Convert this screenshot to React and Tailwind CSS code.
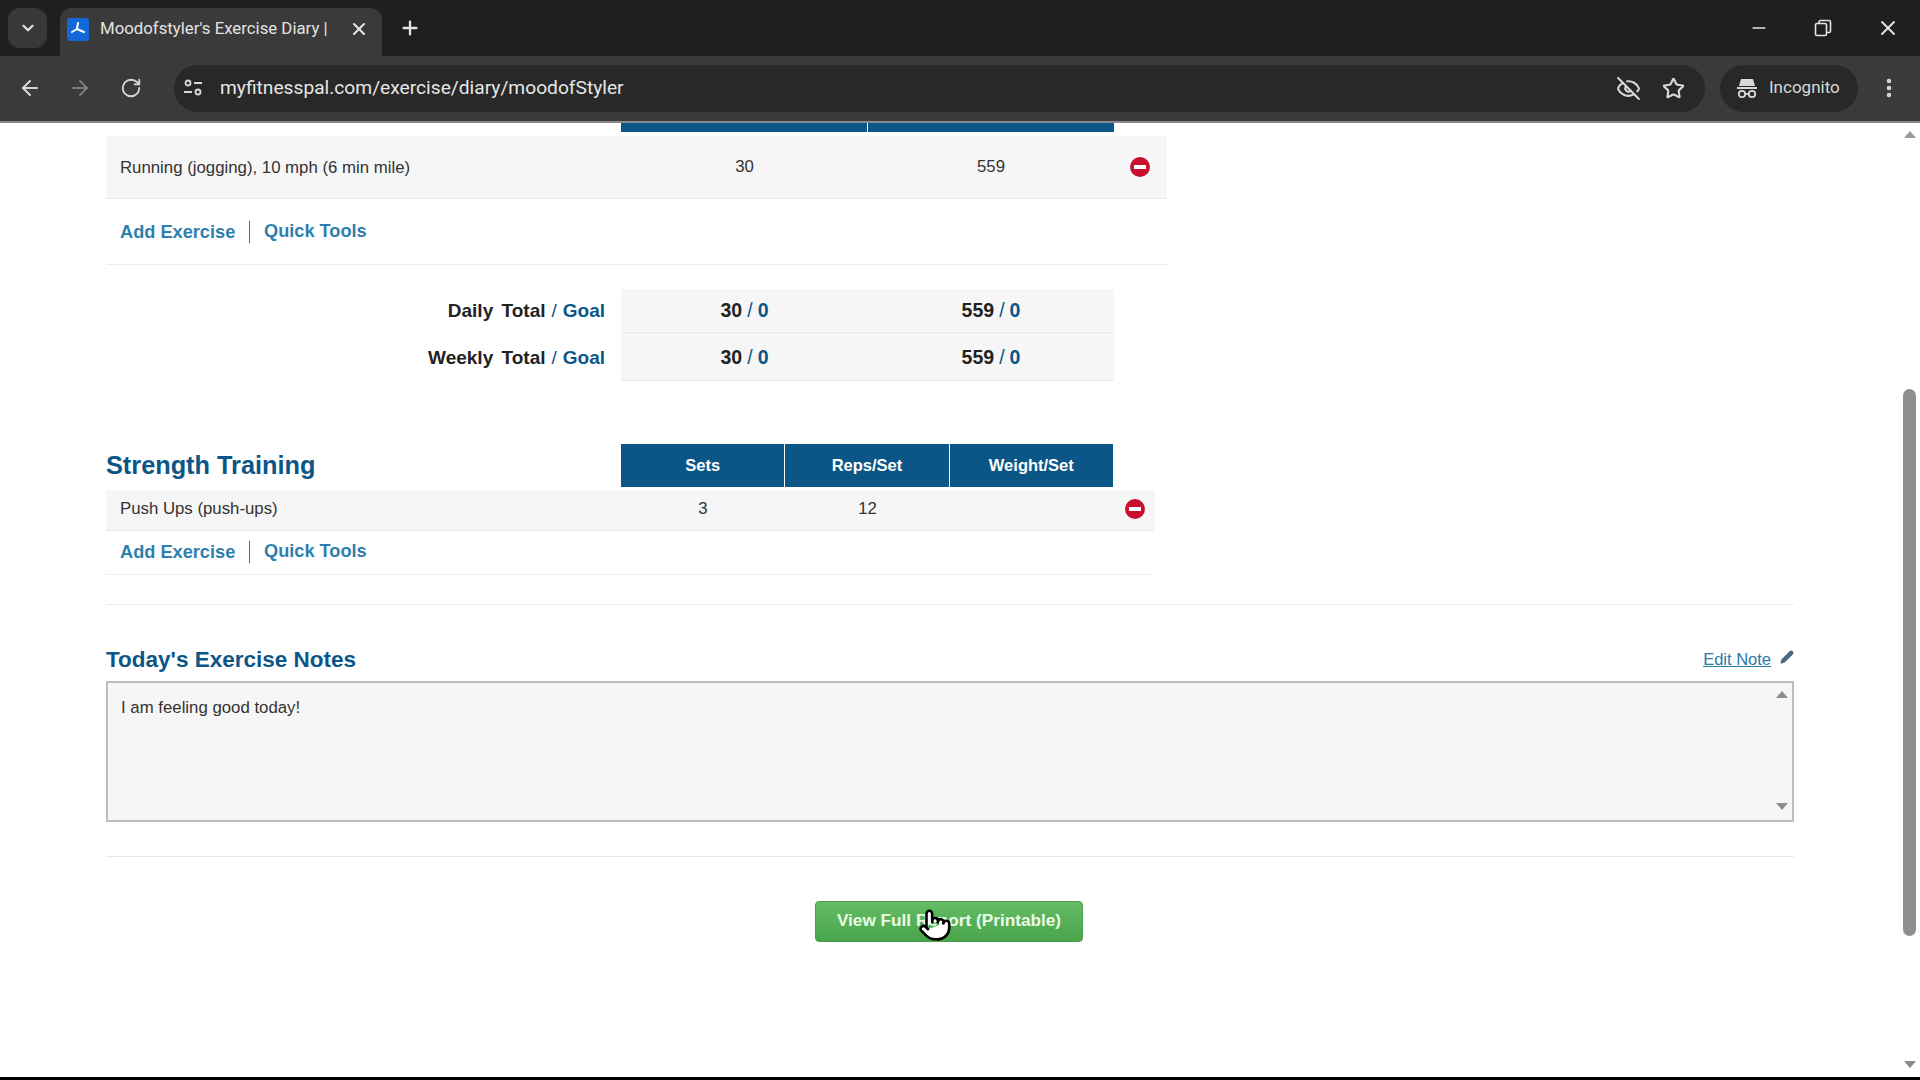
import React from "react";
import { ArrowLeft, ArrowRight, RotateCw, Star, EyeOff, X, Plus, ChevronDown, EllipsisVertical, Minus, Pencil, Pointer } from "lucide-react";

const sans = "font-['Liberation_Sans',Arial,sans-serif]";

function Remove() {
  return (
    <span className="flex h-[20px] w-[20px] items-center justify-center rounded-full bg-[#c8102e]">
      <span className="h-[4px] w-[12px] bg-white" />
    </span>
  );
}

function Links({ h }) {
  return (
    <div className={`flex items-center pl-[14px] text-[18.2px] font-bold text-[#2f7fae] ${h}`}>
      <span className="w-[130px] border-r border-[#2a7aa8] leading-[22px]">Add Exercise</span>
      <span className="pl-[14px]">Quick Tools</span>
    </div>
  );
}

function TotalRow({ label, h, border }) {
  return (
    <div className="flex">
      <div className={`flex w-[515px] items-center justify-end pr-[16px] text-[19px] font-bold text-[#222] ${h}`}>
        <span className="[word-spacing:3px]">{label} Total</span>
        <span className="px-[6px] font-normal text-[#0b5687]">/</span>
        <span className="text-[#0b5687]">Goal</span>
      </div>
      <div className={`flex w-[493px] bg-[#f6f6f6] text-[19.5px] font-bold text-[#222] ${h} ${border}`}>
        <div className="flex w-[247px] items-center justify-center">30<span className="px-[5px] font-normal text-[#0b5687]">/</span><span className="text-[#0b5687]">0</span></div>
        <div className="flex w-[246px] items-center justify-center">559<span className="px-[5px] font-normal text-[#0b5687]">/</span><span className="text-[#0b5687]">0</span></div>
      </div>
    </div>
  );
}

export default function App() {
  return (
    <div className={`relative flex h-[1080px] w-[1920px] flex-col overflow-hidden bg-white ${sans}`}>
      {/* tab strip */}
      <div className="flex h-[56px] items-start bg-[#1f1f1f] font-['Roboto',sans-serif] text-[#e3e3e3]">
        <div className="ml-[8px] mt-[8px] flex h-[40px] w-[39px] items-center justify-center rounded-[12px] bg-[#383838]">
          <ChevronDown size={18} strokeWidth={3} />
        </div>
        <div className="ml-[13px] mt-[8px] flex h-[48px] w-[322px] items-center rounded-t-[12px] bg-[#3a3a3a] pb-[6px]">
          <div className="ml-[7px] flex h-[23px] w-[22px] items-center justify-center rounded-[3px] bg-[#1467d6]">
            <svg width="16" height="16" viewBox="0 0 16 16" fill="none" stroke="white" strokeWidth="2" strokeLinecap="round">
              <path d="M8 2 L7 8 L2 11 M7 8 L14 11" />
            </svg>
          </div>
          <span className="ml-[11px] w-[232px] whitespace-nowrap text-[16.8px]">Moodofstyler's Exercise Diary |</span>
          <X size={20} strokeWidth={2.5} className="ml-[17px]" />
        </div>
        <Plus size={22} strokeWidth={2.5} className="ml-[17px] mt-[17px]" />
        <Minus size={20} className="ml-[1328px] mt-[18px]" />
        <svg width="18" height="18" viewBox="0 0 18 18" fill="none" stroke="currentColor" strokeWidth="1.6" className="ml-[45px] mt-[19px]">
          <rect x="1.5" y="4.5" width="11" height="12" rx="1.5" />
          <path d="M5 4.5V3a1.5 1.5 0 0 1 1.5-1.5H15A1.5 1.5 0 0 1 16.5 3v9a1.5 1.5 0 0 1-1.5 1.5h-2.5" />
        </svg>
        <X size={24} strokeWidth={2} className="ml-[44px] mt-[16px]" />
      </div>

      {/* toolbar */}
      <div className="flex h-[67px] items-center border-b-2 border-[#8a8a8a] bg-[#3a3a3a] pb-[1px] font-['Roboto',sans-serif] text-[#d8d8d8]">
        <ArrowLeft size={24} className="ml-[18px]" />
        <ArrowRight size={24} className="ml-[26px] text-[#7c7c7c]" />
        <RotateCw size={22} className="ml-[28px]" />
        <div className="ml-[32px] flex h-[47px] w-[1531px] items-center rounded-full bg-[#282828]">
          <svg width="20" height="20" viewBox="0 0 20 20" fill="none" stroke="currentColor" strokeWidth="1.8" className="ml-[9px]">
            <circle cx="5" cy="5" r="2.5" /><path d="M11 5h8M1 14h8" /><circle cx="15" cy="14" r="2.5" />
          </svg>
          <span className="ml-[17px] text-[19.2px] text-[#e6e6e6]">myfitnesspal.com/exercise/diary/moodofStyler</span>
          <EyeOff size={25} className="ml-[992px]" />
          <Star size={23} strokeWidth={2.2} className="ml-[21px]" />
        </div>
        <div className="ml-[15px] flex h-[47px] w-[138px] items-center rounded-full bg-[#282828]">
          <svg width="20" height="22" viewBox="0 0 20 22" fill="currentColor" className="ml-[17px]">
            <path d="M4 2h12l2 7H2z" /><rect x="0" y="10" width="20" height="2" />
            <circle cx="5" cy="17" r="3.2" fill="none" stroke="currentColor" strokeWidth="1.8" />
            <circle cx="15" cy="17" r="3.2" fill="none" stroke="currentColor" strokeWidth="1.8" />
            <rect x="8" y="16" width="4" height="1.8" />
          </svg>
          <span className="ml-[12px] text-[17px]">Incognito</span>
        </div>
        <EllipsisVertical size={24} strokeWidth={2.5} className="ml-[19px]" />
      </div>

      {/* page */}
      <div className="flex min-h-0 flex-1">
        <div className="w-[1896px] pl-[106px] text-[#333]">
          <div className="ml-[515px] flex h-[9px] w-[493px] gap-px">
            <div className="w-[246px] bg-[#0b5687]" />
            <div className="flex-1 bg-[#0b5687]" />
          </div>
          <div className="mt-[4px] flex h-[63px] w-[1061px] items-center border-b border-[#ececec] bg-[#f6f6f6] text-[16.8px]">
            <div className="w-[515px] pl-[14px] pt-[1px]">Running (jogging), 10 mph (6 min mile)</div>
            <div className="w-[247px] text-center">30</div>
            <div className="w-[246px] text-center">559</div>
            <div className="pl-[16px] pb-[1px]"><Remove /></div>
          </div>
          <Links h="h-[65px]" />
          <div className="h-px w-[1061px] bg-[#ececec]" />
          <div className="mt-[24px] flex flex-col gap-[1px]">
            <TotalRow label="Daily" h="h-[45px]" border="border-b border-[#e8e8e8]" />
            <TotalRow label="Weekly" h="h-[46px]" border="border-b border-[#e8e8e8]" />
          </div>

          <div className="mt-[63px] flex h-[43px] items-center">
            <h2 className="w-[515px] text-[25.3px] font-bold text-[#0b5687]">Strength Training</h2>
            <div className="flex h-full w-[492px] gap-px text-[16.5px] font-bold text-white">
              <div className="flex flex-1 items-center justify-center bg-[#0b5687]">Sets</div>
              <div className="flex flex-1 items-center justify-center bg-[#0b5687]">Reps/Set</div>
              <div className="flex flex-1 items-center justify-center bg-[#0b5687]">Weight/Set</div>
            </div>
          </div>
          <div className="mt-[3px] flex h-[41px] w-[1049px] items-center border-b border-[#e8e8e8] bg-[#f6f6f6] pb-[2px] text-[16.8px]">
            <div className="w-[515px] pl-[14px]">Push Ups (push-ups)</div>
            <div className="w-[164px] text-center">3</div>
            <div className="w-[165px] text-center">12</div>
            <div className="w-[175px]" />
            <Remove />
          </div>
          <Links h="h-[42px]" />
          <div className="mt-[1px] h-px w-[1045px] bg-[#ececec]" />
          <div className="mt-[29px] h-px w-[1688px] bg-[#ececec]" />

          <div className="mt-[39px] flex h-[37px] w-[1688px] items-start justify-between">
            <h3 className="text-[22.5px] font-bold leading-[31px] text-[#0b5687]">Today's Exercise Notes</h3>
            <div className="flex items-center pt-[3px]">
              <span className="text-[16.5px] text-[#2a7aa8] underline">Edit Note</span>
              <Pencil size={14} className="ml-[9px] mb-[4px] fill-[#4a6a80] text-[#4a6a80]" />
            </div>
          </div>
          <div className="flex h-[141px] w-[1688px] justify-between border-2 border-[#bdbdbd] bg-[#f6f6f6] pl-[13px] pt-[15px]">
            <span className="text-[16.8px] leading-[20px]">I am feeling good today!</span>
            <div className="-mt-[9px] flex h-[125px] w-[20px] flex-col items-center justify-between pb-[4px] pt-[2px]">
              <span className="h-0 w-0 border-x-[6px] border-b-[7px] border-x-transparent border-b-[#8c8c8c]" />
              <span className="h-0 w-0 border-x-[6px] border-t-[7px] border-x-transparent border-t-[#8c8c8c]" />
            </div>
          </div>
          <div className="mt-[34px] h-px w-[1688px] bg-[#e8e8e8]" />

          <div className="mt-[44px] flex w-[1688px] pl-[709px]">
            <button className="h-[41px] w-[268px] rounded-[4px] border border-[#4a9e4c] bg-gradient-to-b from-[#65bd66] to-[#48a44a] pb-[1px] text-[17.2px] font-bold text-[#eafbe6]">
              View Full Report (Printable)
            </button>
          </div>
        </div>

        {/* page scrollbar */}
        <div className="flex w-[24px] flex-col items-center pt-[8px]">
          <span className="ml-[4px] h-0 w-0 border-x-[6px] border-b-[7px] border-x-transparent border-b-[#9a9a9a]" />
          <div className="ml-[3px] mt-[251px] h-[547px] w-[13px] rounded-full bg-[#8f8f8f]" />
          <span className="ml-[4px] mt-[125px] h-0 w-0 border-x-[6px] border-t-[7px] border-x-transparent border-t-[#8a8a8a]" />
        </div>
      </div>
      <div className="h-[3px] bg-black" />

      <Pointer size={34} strokeWidth={1.8} className="absolute left-[918px] top-[908px] fill-white text-black" />
    </div>
  );
}
